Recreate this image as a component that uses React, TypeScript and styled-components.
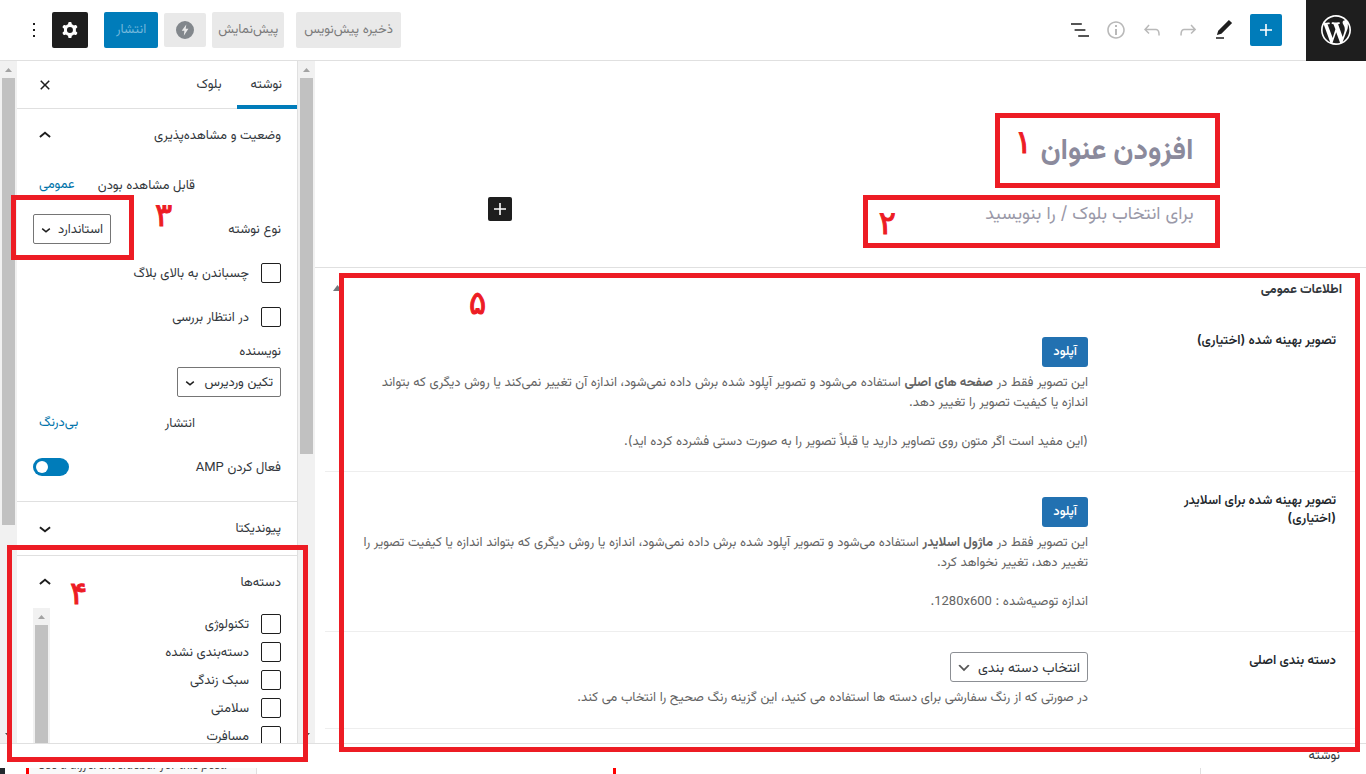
import React from 'react';
import styled, { createGlobalStyle, css } from 'styled-components';

const color = {
  ink: '#1e1e1e',
  text: '#32373c',
  muted: '#646464',
  line: '#e0e0e0',
  faint: '#eeeeee',
  blue: '#007cba',
  link: '#0073aa',
  metaBlue: '#2271b1',
  note: '#ed1c24',
};

const GlobalStyle = createGlobalStyle`
  *, *::before, *::after { box-sizing: border-box; }
  html, body { margin: 0; background: #fff; }
  body, button, input, select {
    font-family: Inter, Vazirmatn, "Noto Sans Arabic", "Liberation Sans", sans-serif;
    font-size: 13px;
    color: ${color.text};
  }
  h1, h2, h3, p { margin: 0; font-size: 13px; }
`;

const Page = styled.div`
  position: relative;
  display: flex;
  flex-direction: column;
  height: 100vh;
  overflow: hidden;
  line-height: 20px;
`;

const Latin = styled.bdi`
  font-family: Roboto, sans-serif;
  line-height: 1;
`;

/* ---------- top bar ---------- */

const TopBar = styled.header`
  display: flex;
  align-items: stretch;
  justify-content: space-between;
  flex: none;
  height: 61px;
  border-bottom: 1px solid ${color.line};
`;

const Tools = styled.div`
  display: flex;
  align-items: center;
`;

const Actions = styled.div`
  display: flex;
  align-items: center;
  gap: 6px;
  padding-left: 16px;
`;

const HomeLink = styled.a`
  display: flex;
  align-items: center;
  justify-content: center;
  width: 60px;
  height: 61px;
  margin-left: 24px;
  background: ${color.ink};
  color: #fff;
`;

const IconButton = styled.button<{ $faded?: boolean }>`
  display: flex;
  align-items: center;
  justify-content: center;
  width: 36px;
  height: 36px;
  padding: 0;
  border: 0;
  border-radius: 2px;
  background: none;
  color: ${(p) => (p.$faded ? '#b9b9b9' : color.ink)};
`;

const AddButton = styled(IconButton)`
  width: 32px;
  height: 32px;
  margin-left: 8px;
  background: ${color.blue};
  color: #fff;
`;

const SettingsButton = styled(IconButton)`
  margin-right: 10px;
  background: ${color.ink};
  color: #fff;
`;

const MoreButton = styled(IconButton)`
  margin-right: -6px;
`;

const ActionButton = styled.button<{ $primary?: boolean; $wide?: boolean }>`
  height: 36px;
  padding: 0 ${(p) => (p.$primary ? 12 : p.$wide ? 8 : 6)}px;
  border: 0;
  border-radius: 2px;
  background: ${(p) => (p.$primary ? color.blue : '#e9e9e9')};
  color: ${(p) => (p.$primary ? '#73b8dc' : '#7b7b7b')};
  ${(p) => p.$wide && css`margin-left: 6px;`}
`;

const AmpButton = styled(IconButton)`
  width: 42px;
  height: 34px;
  background: #e9e9e9;
  color: #82878c;
`;

/* ---------- scroll bars ---------- */

const Track = styled.div`
  display: flex;
  flex-direction: column;
  align-items: center;
  flex: none;
  width: 17px;
  background: #f1f1f1;
`;

const Arrow = styled.div<{ $down?: boolean }>`
  display: flex;
  align-items: center;
  justify-content: center;
  flex: none;
  width: 17px;
  height: 17px;
  color: ${(p) => (p.$down ? '#505050' : '#a3a3a3')};
`;

const Slide = styled.div`
  flex: 1;
  width: 13px;
`;

const Thumb = styled.div<{ $size: number }>`
  height: ${(p) => p.$size}%;
  background: #c1c1c1;
`;

function ScrollTrack({ size }: { size: number }) {
  return (
    <Track aria-hidden="true">
      <Arrow>
        <svg width="7" height="4" viewBox="0 0 7 4"><path fill="currentColor" d="M3.5 0L7 4H0z" /></svg>
      </Arrow>
      <Slide><Thumb $size={size} /></Slide>
      <Arrow $down>
        <svg width="7" height="4" viewBox="0 0 7 4"><path fill="currentColor" d="M3.5 4L7 0H0z" /></svg>
      </Arrow>
    </Track>
  );
}

/* ---------- editor ---------- */

const Workspace = styled.div`
  display: flex;
  flex: 1;
  min-height: 0;
`;

const Editor = styled.main`
  display: flex;
  flex-direction: column;
  flex: 1;
  min-width: 0;
  overflow: hidden;
`;

const Canvas = styled.div`
  display: flex;
  flex-direction: column;
  gap: 26px;
  flex: none;
  width: 100%;
  max-width: 706px;
  margin: 0 auto;
  padding: 64px 0 40px;
`;

const TitleInput = styled.input`
  width: 100%;
  height: 46px;
  padding: 0;
  border: 0;
  outline: 0;
  font-size: 29px;
  font-weight: 700;
  &::placeholder { color: #8b8a9c; opacity: 1; }
`;

const Paragraph = styled.div`
  display: flex;
  align-items: flex-start;
`;

const ParagraphInput = styled.input`
  flex: 1;
  min-width: 0;
  height: 30px;
  padding: 0;
  border: 0;
  outline: 0;
  font-size: 18px;
  &::placeholder { color: #9a99a8; opacity: 1; }
`;

const Inserter = styled(IconButton)`
  width: 24px;
  height: 24px;
  background: ${color.ink};
  color: #fff;
`;

const MetaBox = styled.section`
  flex: none;
  padding: 0 10px;
  border-top: 1px solid ${color.line};
`;

const MetaHeader = styled.div`
  display: flex;
  align-items: center;
  justify-content: space-between;
  height: 44px;
  padding: 0 14px 4px 8px;
  color: #72777c;
`;

const MetaTitle = styled.h2`
  font-weight: 700;
  color: #32373c;
`;

const MetaRow = styled.div<{ $compact?: boolean }>`
  display: flex;
  align-items: flex-start;
  padding: ${(p) => (p.$compact ? '20px 20px 22px 0' : '25px 20px 21px 0')};
  border-bottom: 1px solid ${color.faint};
`;

const MetaLabel = styled.label<{ $compact?: boolean }>`
  flex: none;
  width: 248px;
  padding-left: 84px;
  margin-top: ${(p) => (p.$compact ? -2 : -7)}px;
  font-weight: 600;
  line-height: 18px;
  color: #23282d;
`;

const MetaField = styled.div`
  flex: 1;
  min-width: 0;
`;

const UploadButton = styled.button`
  display: block;
  height: 30px;
  padding: 0 11px;
  margin-bottom: 4px;
  border: 0;
  border-radius: 3px;
  background: ${color.metaBlue};
  color: #fff;
  font-weight: 500;
`;

const Help = styled.p`
  color: ${color.muted};
  & + & { margin-top: 19px; }
  b { font-weight: 700; }
`;

/* ---------- form parts ---------- */

const SelectFrame = styled.span<{ $width: number; $meta?: boolean }>`
  position: relative;
  display: block;
  flex: none;
  width: ${(p) => p.$width}px;
  height: 30px;
  margin-bottom: ${(p) => (p.$meta ? 4 : 0)}px;
  select {
    appearance: none;
    width: 100%;
    height: 100%;
    padding: 0 7px 2px 20px;
    border: 1px solid ${(p) => (p.$meta ? '#8c8f94' : '#757575')};
    border-radius: ${(p) => (p.$meta ? 3 : 2)}px;
    background: #fff;
    font-size: ${(p) => (p.$meta ? 14 : 13)}px;
    color: ${color.text};
  }
  svg {
    position: absolute;
    top: ${(p) => (p.$meta ? 8 : 7)}px;
    left: ${(p) => (p.$meta ? 6 : 4)}px;
    color: ${(p) => (p.$meta ? '#555555' : color.ink)};
    pointer-events: none;
  }
`;

const LabelText = styled.span`
  padding-bottom: 2px;
`;

const FieldLabel = styled.label`
  padding-bottom: 2px;
`;

const CheckInput = styled.input`
  appearance: none;
  flex: none;
  width: 20px;
  height: 20px;
  margin: 0;
  border: 1px solid ${color.ink};
  border-radius: 2px;
  background: #fff;
`;

const Switch = styled.input`
  appearance: none;
  display: flex;
  align-items: center;
  justify-content: flex-end;
  width: 36px;
  height: 18px;
  margin: 0;
  padding: 0 3px;
  border-radius: 9px;
  background: ${color.blue};
  &::before {
    content: "";
    width: 12px;
    height: 12px;
    border-radius: 50%;
    background: #fff;
  }
`;

/* ---------- sidebar ---------- */

const Sidebar = styled.aside`
  flex: none;
  width: 281px;
  overflow: hidden;
  border-right: 1px solid ${color.line};
`;

const Tabs = styled.div`
  display: flex;
  align-items: stretch;
  height: 48px;
  border-bottom: 1px solid ${color.line};
  padding-left: 10px;
`;

const Tab = styled.button<{ $active?: boolean }>`
  height: 48px;
  padding: 0 15px 0 14px;
  border: 0;
  background: none;
  box-shadow: ${(p) => (p.$active ? `inset 0 -4px ${color.blue}` : 'none')};
`;

const CloseButton = styled(IconButton)`
  align-self: center;
  margin-right: auto;
`;

const Panel = styled.section`
  border-bottom: 1px solid ${color.line};
`;

const PanelToggle = styled.button`
  display: flex;
  align-items: center;
  justify-content: space-between;
  width: 100%;
  height: 53px;
  padding: 0 16px;
  border: 0;
  background: none;
  svg { color: ${color.ink}; }
`;

const PanelBody = styled.div`
  display: flex;
  flex-direction: column;
  gap: 8px;
  padding: 5px 16px 16px;
`;

const Row = styled.div<{ $indent?: boolean }>`
  display: flex;
  align-items: center;
  justify-content: space-between;
  height: 36px;
  padding-right: ${(p) => (p.$indent ? 86 : 0)}px;
`;

const CheckLabel = styled.label`
  display: flex;
  align-items: center;
  gap: 12px;
  height: 36px;
`;

const LinkButton = styled.button`
  padding: 0 6px;
  border: 0;
  background: none;
  color: ${color.link};
`;

const Author = styled.div`
  display: flex;
  flex-direction: column;
  gap: 7px;
  height: 57px;
  margin-top: -3px;
`;

const Categories = styled.div`
  display: flex;
  height: 230px;
  margin: -1px 16px 16px;
`;

const CategoryList = styled.div`
  display: flex;
  flex-direction: column;
  gap: 8px;
  flex: 1;
  overflow: hidden;
  padding-top: 6px;
`;

const Category = styled.label`
  display: flex;
  align-items: center;
  gap: 12px;
  height: 20px;
`;

/* ---------- footer ---------- */

const Footer = styled.footer`
  flex: none;
  height: 31px;
  border-top: 1px solid ${color.line};
`;

const Breadcrumb = styled.nav`
  height: 24px;
  padding: 0 26px;
`;

const Strip = styled.div`
  display: flex;
  height: 6px;
  overflow: hidden;
  direction: ltr;
`;

const DarkEdge = styled.span`
  width: 5px;
  margin-right: 21px;
  background: #23282d;
`;

const Caption = styled.span`
  width: 231px;
  height: 20px;
  margin-top: -13px;
  padding-left: 9px;
  border-left: 3px solid #ff0000;
  border-right: 1px solid ${color.line};
  background: #f9f9f9;
  font-family: "Open Sans", sans-serif;
  font-style: italic;
  font-size: 12px;
  line-height: 20px;
  white-space: nowrap;
  color: #444;
`;

const Divider = styled.span<{ $red?: boolean; $side: 'left' | 'right' }>`
  width: ${(p) => (p.$red ? 3 : 1)}px;
  margin-${(p) => p.$side}: ${(p) => (p.$side === 'left' ? '356px' : '165px')};
  background: ${(p) => (p.$red ? '#ff0000' : color.line)};
`;

const Spacer = styled.span`
  flex: 1;
`;

/* ---------- numbered call-outs ---------- */

type Place = { $top: number; $left?: number; $right?: number; $bottom?: number; $width?: number; $height?: number };

const place = css<Place>`
  position: absolute;
  pointer-events: none;
  top: ${(p) => p.$top}px;
  ${(p) => p.$left !== undefined && `left: ${p.$left}px;`}
  ${(p) => p.$right !== undefined && `right: ${p.$right}px;`}
  ${(p) => p.$bottom !== undefined && `bottom: ${p.$bottom}px;`}
  ${(p) => p.$width !== undefined && `width: ${p.$width}px;`}
  ${(p) => p.$height !== undefined && `height: ${p.$height}px;`}
`;

const Frame = styled.div<Place>`
  ${place}
  border: 5px solid ${color.note};
`;

const Numeral = styled.span<Place>`
  ${place}
  font-family: "DejaVu Sans", sans-serif;
  font-size: 32px;
  line-height: 40px;
  color: ${color.note};
  -webkit-text-stroke: 1px ${color.note};
`;

/* ---------- icons ---------- */

const glyph = {
  wordpress: 'M20 10c0-5.51-4.49-10-10-10C4.48 0 0 4.49 0 10c0 5.52 4.48 10 10 10 5.51 0 10-4.48 10-10zM7.78 15.37L4.37 6.22c.55-.02 1.17-.08 1.17-.08.5-.06.44-1.13-.06-1.11 0 0-1.45.11-2.37.11-.18 0-.37 0-.58-.01C4.12 2.69 6.87 1.11 10 1.11c2.33 0 4.45.87 6.05 2.34-.68-.11-1.65.39-1.65 1.58 0 .74.45 1.36.9 2.1.35.61.55 1.36.55 2.46 0 1.49-1.4 5-1.4 5l-3.03-8.37c.54-.02.82-.17.82-.17.5-.05.44-1.25-.06-1.22 0 0-1.44.12-2.38.12-.87 0-2.33-.12-2.33-.12-.5-.03-.56 1.2-.06 1.22l.92.08 1.26 3.41zM17.41 10c.24-.64.74-1.87.43-4.25.7 1.29 1.05 2.71 1.05 4.25 0 3.29-1.73 6.24-4.4 7.78.97-2.59 1.94-5.2 2.92-7.78zM6.1 18.09C3.12 16.65 1.11 13.53 1.11 10c0-1.3.23-2.48.72-3.59C3.25 10.3 4.67 14.2 6.1 18.09zm4.03-6.63l2.58 6.98c-.86.29-1.76.45-2.71.45-.79 0-1.57-.11-2.29-.33.81-2.38 1.62-4.74 2.42-7.1z',
  plus: 'M18 11.2h-5.2V6h-1.6v5.2H6v1.6h5.2V18h1.6v-5.2H18z',
  edit: 'M20.1 5.1L16.9 2 6.2 12.7l-1.3 4.4 4.5-1.3L20.1 5.1zM4 20.8h8v-1.5H4v1.5z',
  redo: 'M15.6 6.5l-1.1 1 2.9 3.3H8c-.9 0-1.7.3-2.3.9-1.4 1.5-1.4 4.2-1.4 5.6v.2h1.5v-.3c0-1.1 0-3.5 1-4.5.3-.3.7-.5 1.3-.5h9.2L14.5 15l1.1 1.1 4.6-4.6-4.6-5z',
  undo: 'M18.3 11.7c-.6-.6-1.4-.9-2.3-.9H6.7l2.9-3.3-1.1-1-4.5 5L8.5 16l1-1-2.7-2.7H16c.5 0 .9.2 1.3.5 1 1 1 3.4 1 4.5v.3h1.5v-.2c0-1.5 0-4.3-1.5-5.7z',
  info: 'M12 3.2c-4.8 0-8.8 3.9-8.8 8.8 0 4.8 3.9 8.8 8.8 8.8 4.8 0 8.8-3.9 8.8-8.8 0-4.8-4-8.8-8.8-8.8zm0 16c-4 0-7.2-3.3-7.2-7.2C4.8 8 8 4.8 12 4.8s7.2 3.3 7.2 7.2c0 4-3.2 7.2-7.2 7.2zM11 17h2v-6h-2v6zm0-8h2V7h-2v2z',
  outline: 'M13.8 5.2H3v1.5h10.8V5.2zm-3.6 12v1.5H21v-1.5H10.2zm7.2-6H6.6v1.5h10.8v-1.5z',
  cog: 'M10.289 4.836A1 1 0 0111.275 4h1.306a1 1 0 01.987.836l.244 1.466c.787.26 1.503.679 2.108 1.218l1.393-.522a1 1 0 011.216.437l.653 1.13a1 1 0 01-.23 1.273l-1.148.944a6.025 6.025 0 010 2.435l1.149.946a1 1 0 01.23 1.272l-.653 1.13a1 1 0 01-1.216.437l-1.394-.522c-.605.54-1.32.958-2.108 1.218l-.244 1.466a1 1 0 01-.987.836h-1.306a1 1 0 01-.986-.836l-.244-1.466a5.995 5.995 0 01-2.108-1.218l-1.394.522a1 1 0 01-1.217-.436l-.653-1.131a1 1 0 01.23-1.272l1.149-.946a6.026 6.026 0 010-2.435l-1.148-.944a1 1 0 01-.23-1.272l.653-1.131a1 1 0 011.217-.437l1.393.522a5.994 5.994 0 012.108-1.218l.244-1.466zM14.929 12a3 3 0 11-6 0 3 3 0 016 0z',
  more: 'M13 19h-2v-2h2v2zm0-6h-2v-2h2v2zm0-6h-2V5h2v2z',
  close: 'M12 13.06l3.712 3.713 1.061-1.06L13.061 12l3.712-3.712-1.06-1.06L12 10.938 8.288 7.227l-1.061 1.06L10.939 12l-3.712 3.712 1.06 1.061L12 13.061z',
  up: 'M6.300 12.300L12 7.600l5.700 4.700-1.200 1.500L12 10.100l-4.500 3.700z',
  down: 'M17.700 10.900L12 15.600l-5.700-4.700 1.200-1.500L12 13.100l4.500-3.700z',
  bolt: 'M12 3a9 9 0 100 18 9 9 0 000-18zm1.300 3.500l-.6 4.300h2.700l-4.600 7 .6-5H8.700z',
  metaDown: 'M5 6l5 5 5-5 2 1-7 7-7-7 2-1z',
};

function Icon({ name, size = 24, box = '0 0 24 24' }: { name: keyof typeof glyph; size?: number; box?: string }) {
  return (
    <svg width={size} height={size} viewBox={box} aria-hidden="true">
      <path fill="currentColor" fillRule="evenodd" d={glyph[name]} />
    </svg>
  );
}

const categories = ['تکنولوژی', 'دسته‌بندی نشده', 'سبک زندگی', 'سلامتی', 'مسافرت'];

export default function App() {
  return (
    <Page dir="rtl" lang="fa">
      <GlobalStyle />

      <TopBar>
        <Tools>
          <HomeLink href="#" aria-label="وردپرس"><Icon name="wordpress" size={36} box="-2 -2 24 24" /></HomeLink>
          <AddButton aria-label="افزودن بلوک"><Icon name="plus" /></AddButton>
          <IconButton aria-label="ویرایش"><Icon name="edit" /></IconButton>
          <IconButton $faded aria-label="انجام دوباره"><Icon name="redo" /></IconButton>
          <IconButton $faded aria-label="واگرد"><Icon name="undo" /></IconButton>
          <IconButton $faded aria-label="جزئیات"><Icon name="info" /></IconButton>
          <IconButton aria-label="طرح کلی"><Icon name="outline" /></IconButton>
        </Tools>
        <Actions>
          <ActionButton $wide>ذخیره پیش‌نویس</ActionButton>
          <ActionButton>پیش‌نمایش</ActionButton>
          <AmpButton aria-label="پیش‌نمایش AMP"><Icon name="bolt" /></AmpButton>
          <ActionButton $primary>انتشار</ActionButton>
          <SettingsButton aria-label="تنظیمات"><Icon name="cog" /></SettingsButton>
          <MoreButton aria-label="بیشتر"><Icon name="more" /></MoreButton>
        </Actions>
      </TopBar>

      <Workspace>
        <Editor>
          <Canvas>
            <TitleInput placeholder="افزودن عنوان" aria-label="عنوان" />
            <Paragraph>
              <ParagraphInput placeholder="برای انتخاب بلوک / را بنویسید" aria-label="متن" />
              <Inserter aria-label="افزودن بلوک"><Icon name="plus" /></Inserter>
            </Paragraph>
          </Canvas>

          <MetaBox>
            <MetaHeader>
              <MetaTitle>اطلاعات عمومی</MetaTitle>
              <svg width="9" height="6" viewBox="0 0 9 6" aria-hidden="true"><path fill="currentColor" d="M4.500 0L9 6H0z" /></svg>
            </MetaHeader>
            <MetaRow>
              <MetaLabel htmlFor="image">تصویر بهینه شده (اختیاری)</MetaLabel>
              <MetaField>
                <UploadButton id="image">آپلود</UploadButton>
                <Help>
                  این تصویر فقط در <b>صفحه های اصلی</b> استفاده می‌شود و تصویر آپلود شده برش داده نمی‌شود، اندازه آن تغییر نمی‌کند یا روش دیگری که بتواند
                  <br />
                  اندازه یا کیفیت تصویر را تغییر دهد.
                </Help>
                <Help>(این مفید است اگر متون روی تصاویر دارید یا قبلاً تصویر را به صورت دستی فشرده کرده اید).</Help>
              </MetaField>
            </MetaRow>
            <MetaRow>
              <MetaLabel htmlFor="slider">تصویر بهینه شده برای اسلایدر (اختیاری)</MetaLabel>
              <MetaField>
                <UploadButton id="slider">آپلود</UploadButton>
                <Help>
                  این تصویر فقط در <b>ماژول اسلایدر</b> استفاده می‌شود و تصویر آپلود شده برش داده نمی‌شود، اندازه یا روش دیگری که بتواند اندازه یا کیفیت تصویر را
                  <br />
                  تغییر دهد، تغییر نخواهد کرد.
                </Help>
                <Help>اندازه توصیه‌شده : <Latin>1280x600</Latin>.</Help>
              </MetaField>
            </MetaRow>
            <MetaRow $compact>
              <MetaLabel $compact htmlFor="main-category">دسته بندی اصلی</MetaLabel>
              <MetaField>
                <SelectFrame $width={138} $meta>
                  <select id="main-category"><option>انتخاب دسته بندی</option></select>
                  <Icon name="metaDown" size={16} box="0 0 20 20" />
                </SelectFrame>
                <Help>در صورتی که از رنگ سفارشی برای دسته ها استفاده می کنید، این گزینه رنگ صحیح را انتخاب می کند.</Help>
              </MetaField>
            </MetaRow>
          </MetaBox>
        </Editor>

        <ScrollTrack size={58} />

        <Sidebar>
          <Tabs>
            <Tab $active>نوشته</Tab>
            <Tab>بلوک</Tab>
            <CloseButton aria-label="بستن"><Icon name="close" /></CloseButton>
          </Tabs>

          <Panel>
            <PanelToggle>وضعیت و مشاهده‌پذیری<Icon name="up" /></PanelToggle>
            <PanelBody>
              <Row $indent><LabelText>قابل مشاهده بودن</LabelText><LinkButton>عمومی</LinkButton></Row>
              <Row>
                <FieldLabel htmlFor="format">نوع نوشته</FieldLabel>
                <SelectFrame $width={78}>
                  <select id="format"><option>استاندارد</option></select>
                  <Icon name="down" size={18} />
                </SelectFrame>
              </Row>
              <CheckLabel><CheckInput type="checkbox" /><LabelText>چسباندن به بالای بلاگ</LabelText></CheckLabel>
              <CheckLabel><CheckInput type="checkbox" /><LabelText>در انتظار بررسی</LabelText></CheckLabel>
              <Author>
                <label htmlFor="author">نویسنده</label>
                <SelectFrame $width={104}>
                  <select id="author"><option>تکین وردپرس</option></select>
                  <Icon name="down" size={18} />
                </SelectFrame>
              </Author>
              <Row $indent><LabelText>انتشار</LabelText><LinkButton>بی‌درنگ</LinkButton></Row>
              <Row>
                <FieldLabel htmlFor="amp">فعال کردن <Latin>AMP</Latin></FieldLabel>
                <Switch id="amp" type="checkbox" defaultChecked />
              </Row>
            </PanelBody>
          </Panel>

          <Panel>
            <PanelToggle>پیوندیکتا<Icon name="down" /></PanelToggle>
          </Panel>

          <Panel>
            <PanelToggle>دسته‌ها<Icon name="up" /></PanelToggle>
            <Categories>
              <CategoryList>
                {categories.map((name) => (
                  <Category key={name}><CheckInput type="checkbox" /><LabelText>{name}</LabelText></Category>
                ))}
              </CategoryList>
              <ScrollTrack size={80} />
            </Categories>
          </Panel>
        </Sidebar>

        <ScrollTrack size={69} />
      </Workspace>

      <Footer>
        <Breadcrumb>نوشته</Breadcrumb>
        <Strip>
          <DarkEdge />
          <Caption>Use a different sidebar for this post.</Caption>
          <Divider $red $side="left" />
          <Spacer />
          <Divider $side="right" />
        </Strip>
      </Footer>

      <Frame $top={113} $right={146} $width={225} $height={75} />
      <Numeral $top={122} $right={334}>۱</Numeral>
      <Frame $top={195} $right={146} $width={357} $height={53} />
      <Numeral $top={203} $right={470}>۲</Numeral>
      <Frame $top={195} $left={11} $width={123} $height={65} />
      <Numeral $top={195} $left={155}>۳</Numeral>
      <Frame $top={545} $left={7} $width={301} $bottom={12} />
      <Numeral $top={573} $left={70}>۴</Numeral>
      <Frame $top={273} $left={339} $right={6} $bottom={22} />
      <Numeral $top={283} $left={469}>۵</Numeral>
    </Page>
  );
}
